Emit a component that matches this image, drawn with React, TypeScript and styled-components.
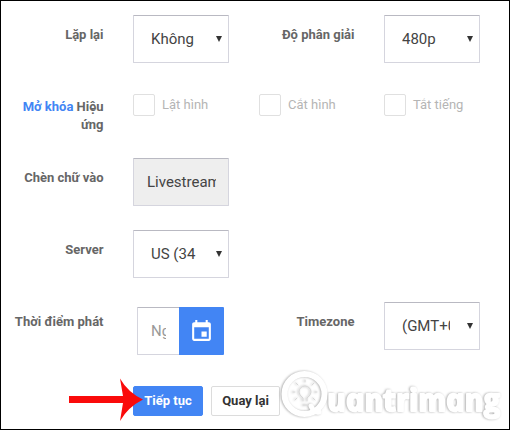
import React from "react";
import styled, { createGlobalStyle } from "styled-components";

const GlobalStyle = createGlobalStyle`
  * { box-sizing: border-box; }
  body { margin: 0; background: #fff; font-family: Roboto, "Noto Sans", sans-serif; }
`;

const Panel = styled.main`
  position: relative;
  width: 510px;
  height: 430px;
  padding: 14px 0 0 12px;
  border: 1px solid #000;
  background: #fff;
  overflow: hidden;
`;

const Row = styled.div<{ $height: number }>`
  display: grid;
  grid-template-columns: 91px 96px 97px 96px;
  column-gap: 29px;
  align-items: start;
  height: ${(p) => p.$height}px;
`;

const Label = styled.label<{ $top?: number }>`
  padding-top: ${(p) => p.$top ?? 11}px;
  padding-right: 0.5px;
  color: #666;
  font-size: 13px;
  font-weight: 700;
  line-height: 18px;
  text-align: right;
`;

const UnlockLink = styled.a`
  color: #4285f4;
`;

const Field = styled.div<{ $muted?: boolean }>`
  display: flex;
  align-items: center;
  height: 48px;
  padding: 0 ${(p) => (p.$muted ? 12 : 6)}px 0 ${(p) => (p.$muted ? 13 : 17)}px;
  border: 1px solid #d5d5de;
  border-top-color: #b9b9c2;
  border-radius: 1px;
  background: ${(p) => (p.$muted ? "#eee" : "#fff")};
  color: #444;
  font-size: 15px;
`;

const Value = styled.span<{ $width?: number }>`
  width: ${(p) => p.$width ?? 48}px;
  line-height: 22px;
  overflow: hidden;
  white-space: nowrap;
`;

const Caret = styled.svg`
  width: 6px;
  height: 6px;
  margin-left: auto;
  fill: #333;
`;

const Checks = styled.div`
  display: grid;
  grid-template-columns: 126px 125px 100px;
  grid-column: 2 / -1;
`;

const Check = styled.label`
  display: flex;
  gap: 7px;
  color: #b5b5b5;
  font-size: 13px;
  line-height: 21px;
`;

const Box = styled.span`
  width: 22px;
  height: 22px;
  border: 1px solid #e0e0e0;
  border-radius: 2px;
`;

const DateGroup = styled.div`
  display: flex;
  width: 87px;
  margin: 5px 0 0 4px;
`;

const DateInput = styled.div`
  display: flex;
  align-items: center;
  width: 42px;
  height: 48px;
  padding-left: 13px;
  border: 1px solid #d5d5de;
  border-top-color: #b9b9c2;
  border-right: 0;
  border-radius: 1px 0 0 1px;
  color: #999;
  font-size: 15px;
`;

const DateButton = styled.button`
  display: grid;
  place-items: center;
  width: 45px;
  height: 48px;
  padding: 0;
  border: 0;
  border-radius: 0 1px 1px 0;
  background: #4285f4;
`;

const Actions = styled.div`
  display: flex;
  gap: 8px;
  padding-left: 120px;
`;

const Button = styled.button<{ $primary?: boolean }>`
  width: ${(p) => (p.$primary ? 70 : 69)}px;
  height: 30px;
  padding: 0;
  border: 1px solid ${(p) => (p.$primary ? "#4285f4" : "#dcdcdc")};
  border-radius: 2px;
  background: ${(p) => (p.$primary ? "#4285f4" : "#fff")};
  color: ${(p) => (p.$primary ? "#fff" : "#333")};
  font: 700 13px/18px Roboto, "Noto Sans", sans-serif;
`;

const Pointer = styled.svg`
  position: absolute;
  left: 67px;
  top: 376px;
`;

const Watermark = styled.svg`
  position: absolute;
  left: 275px;
  top: 365px;
  filter: drop-shadow(-0.5px 0.5px 0.9px rgba(0, 0, 0, 0.32));
`;

const Brand = styled.text`
  font: italic 700 31px "Open Sans", sans-serif;
`;

function Select({ value }: { value: string }) {
  return (
    <Field>
      <Value>{value}</Value>
      <Caret viewBox="0 0 6 6"><path d="M0 0h6L3 6z" /></Caret>
    </Field>
  );
}

function CheckOption({ text }: { text: string }) {
  return <Check><Box />{text}</Check>;
}

export default function App() {
  return (
    <Panel>
      <GlobalStyle />
      <Row $height={79}>
        <Label>Lặp lại</Label>
        <Select value="Không" />
        <Label>Độ phân giải</Label>
        <Select value="480p" />
      </Row>
      <Row $height={64}>
        <Label $top={4}><UnlockLink>Mở khóa</UnlockLink> Hiệu ứng</Label>
        <Checks>
          <CheckOption text="Lật hình" />
          <CheckOption text="Cắt hình" />
          <CheckOption text="Tắt tiếng" />
        </Checks>
      </Row>
      <Row $height={72}>
        <Label>Chèn chữ vào</Label>
        <Field $muted><Value $width={69}>Livestream</Value></Field>
      </Row>
      <Row $height={72}>
        <Label>Server</Label>
        <Select value="US (34" />
      </Row>
      <Row $height={84}>
        <Label>Thời điểm phát</Label>
        <DateGroup>
          <DateInput><Value $width={15}>Ngày</Value></DateInput>
          <DateButton aria-label="calendar">
            <svg width="25" height="25" viewBox="0 0 24 24" fill="#fff">
              <path d="M17 12h-5v5h5v-5zM16 1v2H8V1H6v2H5c-1.110 0-1.990.9-1.990 2L3 19c0 1.100.89 2 2 2h14c1.100 0 2-.9 2-2V5c0-1.100-.9-2-2-2h-1V1h-2zm3 18H5V8h14v11z" />
            </svg>
          </DateButton>
        </DateGroup>
        <Label>Timezone</Label>
        <Select value="(GMT+07:00)" />
      </Row>
      <Actions>
        <Button $primary>Tiếp tục</Button>
        <Button>Quay lại</Button>
      </Actions>
      <Pointer width="76" height="46" viewBox="0 0 76 46">
        <path d="M1 19h54L52 1.500q8 14 23 21Q60 30 52 44l3-18H1z" fill="#fa0a0a" />
      </Pointer>
      <Watermark width="234" height="62" viewBox="0 0 234 62">
        <g fill="none" stroke="#fff" strokeLinecap="round" strokeLinejoin="round">
          <circle cx="28.500" cy="28" r="20" strokeWidth="6" />
          <path d="M35 40q3 7 8 6" strokeWidth="5" />
        </g>
        <path d="M27 35v-3q-4-3-4-6a6 6 0 0 1 12 0q0 3-4 6v3M27 39h4M29 16v-2M22 19l-2-2M36 19l2-2M19 26h-2M39 26h2M21 32l-2 2M37 32l2 2" fill="none" stroke="#d8d8d8" strokeLinecap="round" strokeWidth="1" />
        <g transform="translate(53 45) skewX(12)">
          <Brand x="0" y="0" fill="#fff" stroke="#fff" strokeWidth="2" strokeLinejoin="round" textLength="173" lengthAdjust="spacingAndGlyphs">uantrimang</Brand>
        </g>
      </Watermark>
    </Panel>
  );
}
